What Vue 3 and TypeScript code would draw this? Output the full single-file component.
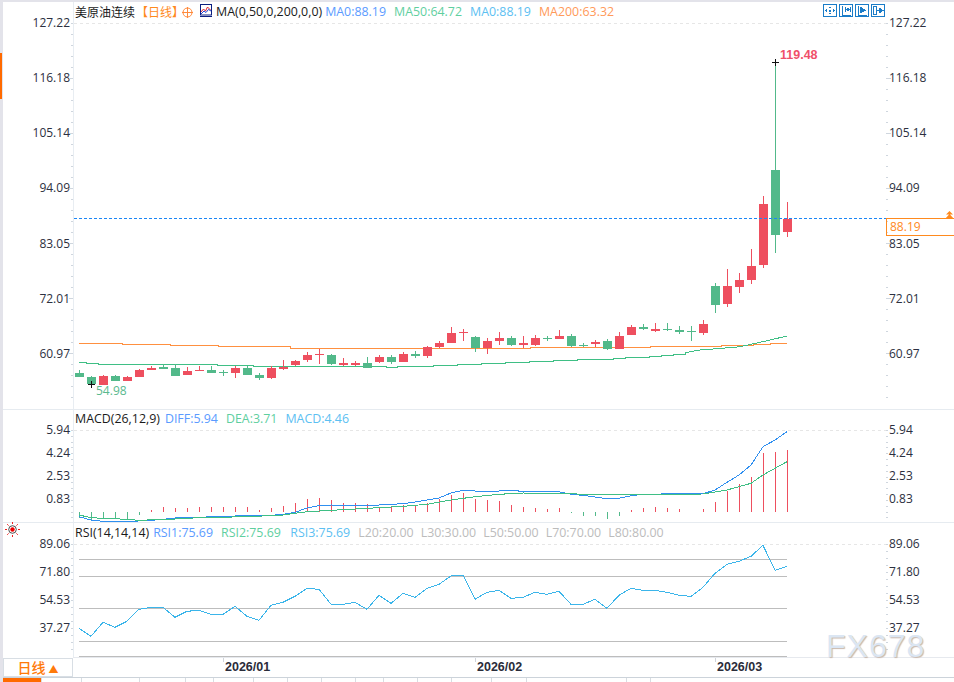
<script setup lang="ts">
type Candle = [number, number, number, number]
const RED = '#ee4f5f'
const GREEN = '#52b98a'
// Each row: colour flag, body top, body bottom, wick top, wick bottom (page pixels)
const raw: Array<[string, number, number, number, number]> = [
  ['g',373,377,370,377],['g',377,384,376,384],['r',376,385,375,385],['g',376,381,375,381],['r',377,381,376,381],
  ['r',370,377,369,377],['r',368,370,366,370],['g',367,369,364,369],['g',368,376,364,376],['r',371,375,367,375],
  ['r',370,371,366,371],['g',370,373,366,373],['g',372,373,370,376],['r',368,373,366,378],['g',368,375,366,375],
  ['g',375,378,373,380],['r',368,378,366,379],['r',367,369,360,370],['r',361,365,360,366],['r',355,360,352,362],
  ['r',354,355,349,364],['g',355,364,354,365],['r',363,365,358,366],['r',363,365,361,366],['g',363,368,357,368],
  ['r',357,362,355,363],['g',357,362,355,364],['r',354,362,352,362],['g',354,356,351,358],['r',347,356,346,358],
  ['r',343,347,341,348],['r',333,343,327,343],['r',332,333,329,341],['g',337,348,336,352],['r',341,348,338,354],
  ['r',338,341,332,345],['g',338,345,336,346],['r',343,345,336,348],['r',338,345,335,346],['g',338,339,336,341],
  ['r',336,339,330,339],['g',336,346,334,347],['g',345,346,343,347],['r',342,344,340,347],['g',341,349,339,350],
  ['r',336,349,332,349],['r',327,335,325,335],['g',327,329,324,330],['r',329,331,323,332],['g',329,330,323,331],
  ['g',330,332,326,334],['g',331,332,326,341],['r',324,333,320,335],['g',286,305,283,313],['r',286,304,269,307],
  ['r',280,287,273,293],['r',266,280,249,284],['r',204,265,196,268],['g',170,235,62,253],['r',219,232,202,237]
]
const cx = (i: number): number => 79.5 + 12 * i
const candles = raw.map((c, i) => {
  const v: Candle = [c[1], c[2], c[3], c[4]]
  return { x: cx(i), color: c[0] === 'r' ? RED : GREEN, top: v[0], h: Math.max(v[1] - v[0], 1), wt: v[2], wb: v[3] }
})

const ma200 = '79,343.5 122,343.5 122,344.5 170,344.5 170,345.5 218,345.5 218,346.5 290,346.5 290,348.3 530,348.3 530,347.3 650,347.3 650,346.3 721,346.3 721,345.3 753,345.3 753,344.3 770,344.3 770,343.3 787,343.3'
const ma50 = '79,362.3 86,362.3 86,363.3 98,363.3 98,364.3 217,364.3 217,365.3 253,365.3 253,366.3 386,366.3 386,367.3 397,367.3 397,366.3 433,366.3 433,365.3 457,365.3 457,364.3 481,364.3 481,363.3 505,363.3 505,362.3 529,362.3 529,361.3 553,361.3 553,360.3 577,360.3 577,359.3 613,359.3 613,358.3 625,358.3 625,357.3 649,357.3 649,356.3 661,356.3 661,355.3 673,355.3 673,354.3 685,354.3 685,352.7 700,350 720,348.5 740,346.7 757,343 770,340 787,336'

const hist: number[] = [6.5,8,7,7,7,3,-1.5,-5,-4,-4,-5,-5,-5,-5,-5,-2,-4,-6,-9,-13,-14,-12,-9,-9,-8,-5,-6,-6.7,-6.7,-9,-13,-16.7,-18.7,-12.7,-12,-11,-6.7,-4.7,-3.7,-2.7,-3.7,1.5,4,4,7.5,4,-1.7,-3.7,-4.7,-3.7,-2.7,0.7,-2.7,-9.7,-20.7,-27.7,-34.7,-58.7,-59.7,-61.7]
const bars = hist.map((v, i) => ({ x: cx(i), y: v < 0 ? 511.7 + v : 511.7, h: Math.abs(v), color: v < 0 ? RED : GREEN }))
const diff = '79,516.7 91,520 103,521.3 127,521.3 139,521 151,520.3 163,519.3 175,518 199,517.3 223,516.3 247,515.7 271,515.3 283,514.3 295,512.3 307,508 319,505.7 331,505 367,505.7 391,504.3 403,503.7 415,502 439,498 451,493 463,490.3 475,491 499,491 511,490.7 535,491.7 559,491.7 571,494.3 583,495.3 595,497 607,498.7 619,498.3 631,495.7 643,494.3 679,493.7 703,493.7 715,490 727,482.3 739,475 751,465 763,446.7 775,440 787,431.7'
const dea = '79,515 91,517.7 103,518.3 127,519.3 139,520.3 175,519 199,517.7 247,516.7 283,515 307,511.7 319,511 355,509 391,507 403,506.3 427,504.3 451,500 475,496.7 499,494.3 523,493 571,493.7 595,495 703,494 727,490 751,483.3 763,475 775,468.3 787,461.7'

const rsiZ: number[] = [265,289,247,262,244,208,202,202,232,214,211,223,223,199,229,241,196,187,169,145,148,193,193,187,208,166,190,160,172,145,133,108,106,178,157,151,175,172,157,163,154,193,193,178,205,166,145,151,151,157,166,169,142,100,73,64,49,16,91,79]
const rsi = rsiZ.map((z, i) => `${79 + 12 * i},${(540 + z / 3).toFixed(1)}`).join(' ')
const rsiLevels: number[] = [559.5, 576.5, 608.5, 641.5, 656.5]

const range = (a: number, b: number, s: number): number[] => {
  const out: number[] = []
  for (let y = a; y <= b; y += s) out.push(Math.round(y) + 0.5)
  return out
}
const mainTicks = range(23, 405, 11)
const macdTicks = range(430, 520, 5.83)
const rsiTicks = range(544, 655, 7)

const mainLabels = ['127.22', '116.18', '105.14', '94.09', '83.05', '72.01', '60.97']
const macdLabels = ['5.94', '4.24', '2.53', '0.83']
const rsiLabels = ['89.06', '71.80', '54.53', '37.27']
const tabs = [
  { t: '指标', w: 39, c: 'on' }, { t: '模板', w: 40, c: '' }, { t: '+FT指标', w: 58, c: 'hot' },
  { t: 'MACD', w: 46, c: '' }, { t: 'KD', w: 28, c: '' }, { t: 'KDJ', w: 40, c: '' },
  { t: 'RSI', w: 34, c: '' }, { t: 'WR', w: 34, c: '' }, { t: 'BIAS', w: 34, c: '' },
  { t: 'CCI', w: 28, c: '' }, { t: 'DMI', w: 34, c: '' }, { t: 'VR', w: 34, c: '' },
  { t: 'BOLL', w: 40, c: '' }, { t: 'OBV', w: 35, c: '' }, { t: 'BOLL(20,2) EMA', w: 100, c: '' },
  { t: '设置', w: 24, c: '' }
]
</script>

<template>
  <div class="page">
    <div class="topstrip"></div>
    <div class="body">
      <div class="rail"><div class="railmark"></div></div>
      <div class="work">
        <section class="panel main">
          <div class="axis left main-axis"><span v-for="l in mainLabels" :key="l">{{ l }}</span></div>
          <div class="chart">
            <svg class="plot" width="812" height="408" viewBox="74 2 812 408">
              <g class="tick">
                <template v-for="y in mainTicks" :key="y">
                  <line x1="71" x2="73" :y1="y" :y2="y" /><line x1="886" x2="888" :y1="y" :y2="y" />
                </template>
                <line v-for="y in [78.5,133.5,188.5,243.5,298.5,353.5]" :key="'m'+y" x1="69" x2="73" :y1="y" :y2="y" />
                <line v-for="y in [78.5,133.5,188.5,243.5,298.5,353.5]" :key="'n'+y" x1="886" x2="891" :y1="y" :y2="y" />
              </g>
              <line class="dash" x1="74" x2="886" y1="23.5" y2="23.5" />
              <polyline class="l200" :points="ma200" />
              <polyline class="l50" :points="ma50" />
              <g v-for="c in candles" :key="c.x">
                <line :x1="c.x" :x2="c.x" :y1="c.wt" :y2="c.wb" :stroke="c.color" />
                <rect :x="c.x - 4.5" :y="c.top" width="9" :height="c.h" :fill="c.color" />
              </g>
              <line class="now" x1="74" x2="886" y1="218.5" y2="218.5" />
              <path class="cross" d="M772 62.5h7M775.5 59v7M88 384.5h7M91.5 381v7" />
              <text class="hi" x="780" y="59">119.48</text>
              <text class="lo" x="96" y="395">54.98</text>
            </svg>
            <div class="legend main-legend">
              <span class="ink cjk">美原油连续</span>
              <span class="org cjk period">【日线】</span>
              <svg class="globe" width="11" height="11" viewBox="0 0 11 11"><circle cx="5.5" cy="5.5" r="4.5" /><path d="M0 5.5h11M5.5 0v11" /></svg>
              <svg class="maicon" width="12" height="13" viewBox="0 0 12 13">
                <rect x=".5" y=".5" width="11" height="10.5" fill="#fff" stroke="#0b1f80" />
                <path d="M1 8l2.500-3 2 2 2-4 3 3" fill="none" stroke="#e0202a" />
                <path d="M1 10l3-3 2 1.500 2.500-3 2.500 1.500" fill="none" stroke="#1f3fd0" />
                <path d="M0 12.500h12" stroke="#0b1f80" />
              </svg>
              <span class="ink ma-name">MA(0,50,0,200,0,0)</span>
              <span class="c1">MA0:88.19</span><span class="c2">MA50:64.72</span><span class="c3">MA0:88.19</span><span class="c4">MA200:63.32</span>
            </div>
            <div class="tools">
              <svg width="14" height="13" viewBox="0 0 14 13"><rect x=".5" y=".5" width="13" height="12" /><path class="f" d="M7 2l1.500 2h-3zM7 11l1.500-2h-3zM2 6.500l2-1.500v3zM12 6.500l-2-1.500v3z" /><rect class="f" x="6" y="5.500" width="2" height="2" /></svg>
              <svg width="14" height="13" viewBox="0 0 14 13"><rect x=".5" y=".5" width="13" height="12" /><path d="M3 2v9h9M6.500 3v5M11 3v5" /><path class="f" d="M7 5.500l2-1.500v3zM10.500 5.500l-1.500-1.500v3z" /></svg>
              <svg width="14" height="13" viewBox="0 0 14 13"><rect x=".5" y=".5" width="13" height="12" /><path d="M3 2v9h9" /><path class="f" d="M5 2.500l6 4-6 3z" /></svg>
              <svg width="14" height="13" viewBox="0 0 14 13"><rect x=".5" y=".5" width="13" height="12" /><path d="M2.500 2.500h3v8h-3zM6 6.500h3" /><path class="f" d="M8 3.500l4.500 3-4.500 3z" /></svg>
            </div>
          </div>
          <div class="axis right main-axis">
            <span v-for="l in mainLabels" :key="l">{{ l }}</span>
            <div class="pricebox">88.19</div>
            <svg class="uparrow" width="9" height="8" viewBox="0 0 9 8"><path d="M4.500 0l3.500 3.500h-7zM4.500 3l4.500 5h-9z" /></svg>
          </div>
        </section>

        <section class="panel macd">
          <div class="axis left macd-axis"><span v-for="l in macdLabels" :key="l">{{ l }}</span></div>
          <div class="chart">
            <svg class="plot" width="812" height="113" viewBox="74 410 812 113">
              <g class="tick">
                <template v-for="y in macdTicks" :key="y">
                  <line x1="71" x2="73" :y1="y" :y2="y" /><line x1="886" x2="888" :y1="y" :y2="y" />
                </template>
              </g>
              <line class="dash" x1="74" x2="886" y1="430.5" y2="430.5" />
              <line v-for="b in bars" :key="b.x" :x1="b.x" :x2="b.x" :y1="b.y" :y2="b.y + b.h" :stroke="b.color" />
              <polyline class="ldiff" :points="diff" />
              <polyline class="l50" :points="dea" />
            </svg>
            <div class="legend macd-legend">
              <span class="ink tight">MACD(26,12,9)</span>
              <span class="c1">DIFF:5.94</span><span class="c2">DEA:3.71</span><span class="c3">MACD:4.46</span>
            </div>
          </div>
          <div class="axis right macd-axis"><span v-for="l in macdLabels" :key="l">{{ l }}</span></div>
        </section>

        <section class="panel rsi">
          <div class="axis left rsi-axis"><span v-for="l in rsiLabels" :key="l">{{ l }}</span></div>
          <div class="chart">
            <svg class="plot" width="812" height="135" viewBox="74 523 812 135">
              <g class="tick">
                <template v-for="y in rsiTicks" :key="y">
                  <line x1="71" x2="73" :y1="y" :y2="y" /><line x1="886" x2="888" :y1="y" :y2="y" />
                </template>
              </g>
              <line class="dash" x1="74" x2="886" y1="544.5" y2="544.5" />
              <line v-for="y in rsiLevels" :key="y" class="level" x1="79" x2="787" :y1="y" :y2="y" />
              <polyline class="lrsi" :points="rsi" />
            </svg>
            <div class="legend rsi-legend">
              <span class="ink tighter">RSI(14,14,14)</span>
              <span class="c1">RSI1:75.69</span><span class="c2">RSI2:75.69</span><span class="c3 nudge">RSI3:75.69</span>
              <span class="mute">L20:20.00</span><span class="mute">L30:30.00</span><span class="mute">L50:50.00</span><span class="mute">L70:70.00</span><span class="mute">L80:80.00</span>
            </div>
          </div>
          <div class="axis right rsi-axis"><span v-for="l in rsiLabels" :key="l">{{ l }}</span></div>
          <svg class="sun" width="15" height="15" viewBox="0 0 15 15">
            <circle cx="7.500" cy="7.500" r="2.200" fill="#f00000" />
            <circle cx="7.500" cy="7.500" r="3.800" fill="none" stroke="#222" stroke-width=".8" />
            <path d="M7.500 0v2M7.500 13v2M0 7.500h2M13 7.500h2M2.200 2.200l1.400 1.400M11.400 11.400l1.400 1.400M2.200 12.800l1.400-1.400M11.400 3.600l1.400-1.400" stroke="#f02020" fill="none" />
          </svg>
        </section>

        <section class="timebar">
          <button class="period-btn cjk">日线 <i>▲</i></button>
          <div class="dates">
            <span class="date d1">2026/01</span>
            <span class="date d2">2026/02</span>
            <span class="date d3">2026/03</span>
          </div>
        </section>

        <nav class="tabs">
          <span v-for="t in tabs" :key="t.t" class="tab cjk" :class="t.c" :style="{ width: t.w + 'px' }">{{ t.t }}</span>
        </nav>
      </div>
    </div>
    <div class="mark">FX678</div>
  </div>
</template>

<style>
html, body { margin: 0; padding: 0; background: #fff; }
</style>

<style scoped>
.page {
  position: relative; width: 954px; height: 682px; overflow: hidden; background: #fff;
  display: flex; flex-direction: column;
  font: 12px/16px "Open Sans", "Noto Sans CJK SC", sans-serif; color: #2c3040;
}
.cjk { font-family: "Noto Sans CJK SC", "Open Sans", sans-serif; }
.topstrip { height: 2px; flex: none; background: #e3e3ea; }
.body { display: flex; flex: 1; min-height: 0; }
.rail { width: 3px; flex: none; background: #e3e3ea; position: relative; }
.railmark { position: absolute; left: 0; top: 51px; width: 2px; height: 46px; background: #ff6a00; }
.work { flex: 1; min-width: 0; display: flex; flex-direction: column; }

.panel { display: flex; position: relative; flex: none; border-bottom: 1px solid #e6ebf0; box-sizing: border-box; }
.main { height: 408px; }
.macd { height: 113px; }
.rsi { height: 135px; border-bottom: none; }
.axis { display: flex; flex-direction: column; flex: none; box-sizing: border-box; position: relative; }
.axis.left { width: 70px; text-align: right; padding-right: 3px; }
.axis.right { width: 68px; padding-left: 3px; }
.main-axis { padding-top: 11px; gap: 35.150px; }
.main-axis span { height: 20px; line-height: 20px; }
.macd-axis { padding-top: 12px; gap: 7.100px; }
.macd-axis span { height: 16px; }
.rsi-axis { padding-top: 13px; gap: 12px; }
.rsi-axis span { height: 16px; }
.chart { width: 813px; flex: none; position: relative; border-left: 1px solid #e8edf2; box-sizing: border-box; }
.plot { display: block; overflow: visible; shape-rendering: crispEdges; }
.plot line, .plot polyline { fill: none; }
.tick line { stroke: #cfd6de; }
.dash { stroke: #e6e6e6; stroke-dasharray: 3 3; }
.now { stroke: #1b86f5; stroke-dasharray: 3 2; }
.level { stroke: #bdbdbd; }
.l200 { stroke: #ff9040; }
.l50 { stroke: #3fbf85; }
.ldiff { stroke: #2f8ff0; }
.lrsi { stroke: #3bb5ea; }
.cross { stroke: #111; fill: none; }
.hi { font: 700 12.500px "Liberation Sans", sans-serif; fill: #f0506a; }
.lo { font: 12px "Open Sans", sans-serif; fill: #5ab98e; }

.legend { position: absolute; left: 1px; display: flex; align-items: center; white-space: nowrap; font-size: 12.400px; }
.main-legend { top: 2px; height: 16px; }
.macd-legend { top: 1px; gap: 8px; }
.rsi-legend { top: 2px; gap: 8px; }
.tight { margin-right: -3px; }
.tighter { margin-right: -4px; }
.nudge { margin-left: 1.500px; }
.rsi-legend .mute { margin-right: -1px; }
.ink { color: #1a1a1a; }
.org { color: #ff8a1e; }
.period { margin: 0 -4px 0 1px; font-size: 12px; }
.main-legend .ink.cjk { font-size: 12px; }
.globe { margin: 1px 0 0 2px; fill: none; stroke: #ff8a3c; }
.maicon { margin: -4px 4px 0 7px; }
.ma-name { margin-right: 3px; }
.main-legend .c1, .main-legend .c2, .main-legend .c3 { margin-right: 8px; }
.c1 { color: #5b9bff; }
.c2 { color: #5fcf9f; }
.c3 { color: #5cc0f2; }
.c4 { color: #ff9a5a; }
.mute { color: #bcbcbc; }

.tools { position: absolute; left: 749px; top: 2px; display: flex; gap: 2px; }
.tools svg { fill: none; stroke: #1a7cc8; shape-rendering: crispEdges; }
.tools .f { fill: #1a7cc8; stroke: none; }

.pricebox {
  position: absolute; left: 0; top: 216px; width: 68px; height: 18px; box-sizing: border-box;
  border: 1px solid #ff8a1e; border-width: 1.500px 0 1.500px 1.500px; color: #ff8a1e; padding-left: 3px; line-height: 16px;
}
.uparrow { position: absolute; right: 0; top: 209px; fill: #ff8a1e; }
.sun { position: absolute; left: 2px; top: -1px; }

.timebar { flex: none; height: 19px; display: flex; }
.period-btn {
  width: 70px; height: 19px; box-sizing: border-box; padding: 0; margin: 0; background: #fff;
  border: 1px solid #d8dee4; color: #ff7a0a; font-size: 14px; line-height: 17px; font-weight: 500;
}
.period-btn i { font-style: normal; font-size: 10px; }
.dates { flex: 1; position: relative; border-top: 1px solid #e6e9ee; margin-top: -1px; }
.date { position: absolute; top: 0; font: 700 12.500px/18px "Liberation Sans", sans-serif; color: #2a2c3a; }
.date::before { content: ""; position: absolute; left: -2px; top: 0; height: 4px; border-left: 1px solid #d0d4da; }
.d1 { left: 152px; }
.d2 { left: 404px; }
.d3 { left: 644px; }

.tabs { flex: none; height: 5px; display: flex; overflow: visible; border-top: 1px solid #ccd3da; }
.tab {
  box-sizing: border-box; flex: none; height: 16px; text-align: center; line-height: 20px;
  font-size: 12px; color: #222; border-right: 1px solid #d8dde2; white-space: nowrap; overflow: hidden;
}
.tab.on { background: #ff6a00; color: #fff; }
.tab.hot { color: #ff7a0a; }

.mark {
  position: absolute; left: 826px; top: 627px;
  font: 32px/38px "Liberation Sans", sans-serif; letter-spacing: 1px;
  color: #dbe6f3; text-shadow: 1px 1px 1px #c9b8ac;
}
</style>
